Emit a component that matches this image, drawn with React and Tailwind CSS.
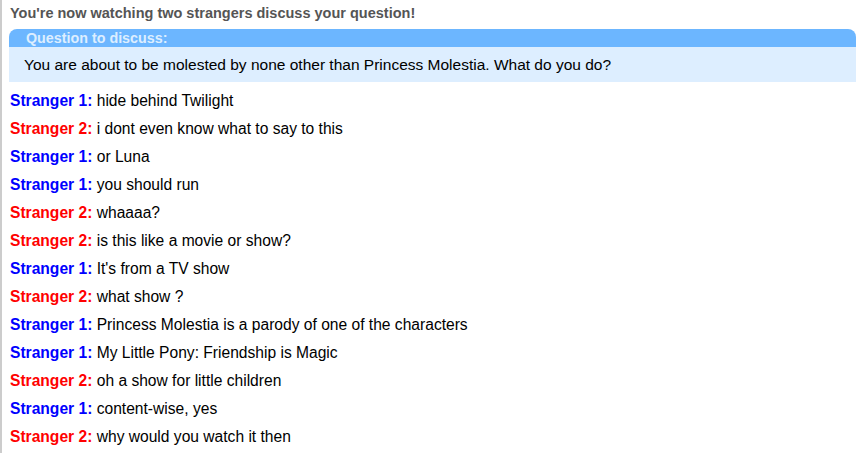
const lines = [
  [1, 'hide behind Twilight'],
  [2, 'i dont even know what to say to this'],
  [1, 'or Luna'],
  [1, 'you should run'],
  [2, 'whaaaa?'],
  [2, 'is this like a movie or show?'],
  [1, "It's from a TV show"],
  [2, 'what show ?'],
  [1, 'Princess Molestia is a parody of one of the characters'],
  [1, 'My Little Pony: Friendship is Magic'],
  [2, 'oh a show for little children'],
  [1, 'content-wise, yes'],
  [2, 'why would you watch it then'],
];

export default function App() {
  return (
    <div className="w-[868px] h-[453px] overflow-hidden bg-white border-l-2 border-[#cccccc] font-['Liberation_Sans',Arial,sans-serif]">
      <div className="pl-[8px] pt-[5px] text-[14.5px] leading-[17px] font-bold text-[#555555]">
        You're now watching two strangers discuss your question!
      </div>
      <div className="ml-[7px] w-[847px] mt-[7px]">
        <div className="h-[18px] bg-[#6cb6ff] rounded-t-[8px] pl-[17px] text-[14.3px] leading-[18px] font-bold text-[#ddeeff]">
          Question to discuss:
        </div>
        <div className="h-[35px] bg-[#ddeeff] pl-[15px] text-[15.5px] leading-[35px] text-black">
          You are about to be molested by none other than Princess Molestia. What do you do?
        </div>
      </div>
      <div className="pl-[8px] pt-[8px] flex flex-col">
        {lines.map(([who, text], i) => (
          <div key={i} className="h-[28px] text-[15.6px] leading-[22px] text-black">
            <span className={who === 1 ? 'font-bold text-[#0000ff]' : 'font-bold text-[#ff0000]'}>
              Stranger {who}:
            </span>{' '}
            {text}
          </div>
        ))}
      </div>
    </div>
  );
}
